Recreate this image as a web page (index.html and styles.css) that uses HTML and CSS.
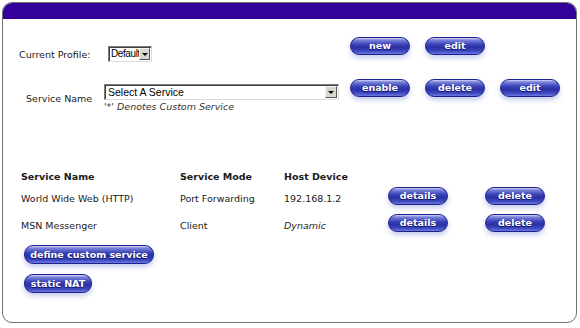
FILE: index.html
```html
<!DOCTYPE html>
<html lang="en">
<head>
  <meta charset="UTF-8" />
  <title>Services</title>
  <link rel="stylesheet" href="styles.css">
</head>
<body>
  <div class="panel">
    <div class="panel-head"></div>

    <div class="top-row row-profile">
      <div class="left">
        <label class="lbl-profile">Current Profile:</label>
        <span class="fake-select sel-profile"><span class="sel-text">Default</span></span>
      </div>
      <div class="btns">
        <button class="btn">new</button>
        <button class="btn">edit</button>
      </div>
    </div>

    <div class="top-row row-service">
      <div class="left">
        <label class="lbl-service">Service Name</label>
        <div class="service-pick">
          <span class="fake-select sel-service"><span class="sel-text">Select A Service</span></span>
          <div class="note">'*' Denotes Custom Service</div>
        </div>
      </div>
      <div class="btns">
        <button class="btn">enable</button>
        <button class="btn">delete</button>
        <button class="btn">edit</button>
      </div>
    </div>

    <div class="services">
      <div class="th">Service Name</div>
      <div class="th">Service Mode</div>
      <div class="th">Host Device</div>
      <div></div>
      <div></div>

      <div class="td">World Wide Web (HTTP)</div>
      <div class="td">Port Forwarding</div>
      <div class="td">192.168.1.2</div>
      <div class="td"><button class="btn">details</button></div>
      <div class="td"><button class="btn">delete</button></div>

      <div class="td">MSN Messenger</div>
      <div class="td">Client</div>
      <div class="td"><em>Dynamic</em></div>
      <div class="td"><button class="btn">details</button></div>
      <div class="td"><button class="btn">delete</button></div>
    </div>

    <div class="extra">
      <button class="btn btn-wide">define custom service</button>
      <button class="btn btn-nat">static NAT</button>
    </div>
  </div>
</body>
</html>
```

FILE: styles.css
```css
body { margin: 0; background: #fff; font-family: "DejaVu Sans", Verdana, sans-serif; font-size: 9.5px; color: #1a1a1a; }

.panel {
  margin: 2px 3px 0 2px;
  height: 321px;
  box-sizing: border-box;
  border: 1px solid #6f6f6f;
  border-radius: 10px;
  overflow: hidden;
  background: #fff;
}
.panel-head { height: 16px; background: #330099; }

.top-row { display: flex; align-items: flex-start; }
.top-row .left { width: 347px; flex: none; display: flex; align-items: center; }
.btns { display: flex; gap: 15px; }

.row-profile { margin-top: 18px; }
.row-profile .left { padding: 9px 0 0 16px; box-sizing: border-box; }
.lbl-profile { width: 89px; }

.row-service { margin-top: 17px; }
.row-service .left { padding: 5px 0 0 23px; box-sizing: border-box; }
.lbl-service { width: 78px; }

.fake-select {
  position: relative;
  display: block;
  height: 16px;
  box-sizing: border-box;
  border: 1px solid #7a7a7a;
  border-right-color: #dcdcdc;
  border-bottom-color: #dcdcdc;
  box-shadow: inset 1px 1px 0 #404040;
  font-family: "Liberation Sans", Arial, sans-serif;
  font-size: 10.5px;
  line-height: 14px;
  padding-left: 3px;
  color: #000;
  background: #fff;
  white-space: nowrap;
  overflow: hidden;
}
.fake-select::after {
  content: "";
  position: absolute;
  right: 1px; top: 1px;
  width: 12px; height: 12px;
  background: #d8d6cf;
  border: 1px solid;
  border-color: #f4f4f4 #555 #555 #f4f4f4;
  box-sizing: border-box;
}
.fake-select::before {
  content: "";
  position: absolute;
  right: 4px; top: 6px;
  border-left: 3px solid transparent;
  border-right: 3px solid transparent;
  border-top: 3px solid #000;
  z-index: 1;
}
.sel-profile { width: 44px; font-size: 10px; letter-spacing: -0.4px; padding-left: 2px; }
.sel-profile::after { width: 11px; }
.sel-profile::before { right: 3px; }
.sel-service { width: 235px; }
.note { font-style: italic; color: #333; margin-top: 1px; line-height: 12px; }

.btn {
  width: 60px;
  height: 18px;
  padding: 0;
  border: 1px solid #1d2190;
  border-radius: 9px;
  background: linear-gradient(#d6d9f6 0, #7c85dc 12%, #3a43b6 40%, #2b31a4 60%, #3d48c0 82%, #6f7ade 100%);
  box-shadow: 0 3px 5px rgba(90, 110, 210, 0.35);
  color: #fff;
  font-family: "DejaVu Sans", Verdana, sans-serif;
  font-size: 9.5px;
  font-weight: bold;
  line-height: 14px;
  text-shadow: 0 1px 1px #101060;
  cursor: pointer;
}

.services {
  display: grid;
  grid-template-columns: 159px 104px 104px 97px 60px;
  margin: 57px 0 0 18px;
  align-items: center;
}
.th { font-weight: bold; height: 14px; line-height: 14px; margin-bottom: 1px; }
.td { height: 27px; line-height: 27px; }
.td .btn { vertical-align: top; margin-top: 2px; }
.td em { font-style: italic; }

.extra { display: flex; flex-direction: column; align-items: flex-start; gap: 10px; margin: 6px 0 0 21px; }
.btn-wide { width: 130px; height: 19px; }
.btn-nat { width: 68px; height: 19px; }
```
